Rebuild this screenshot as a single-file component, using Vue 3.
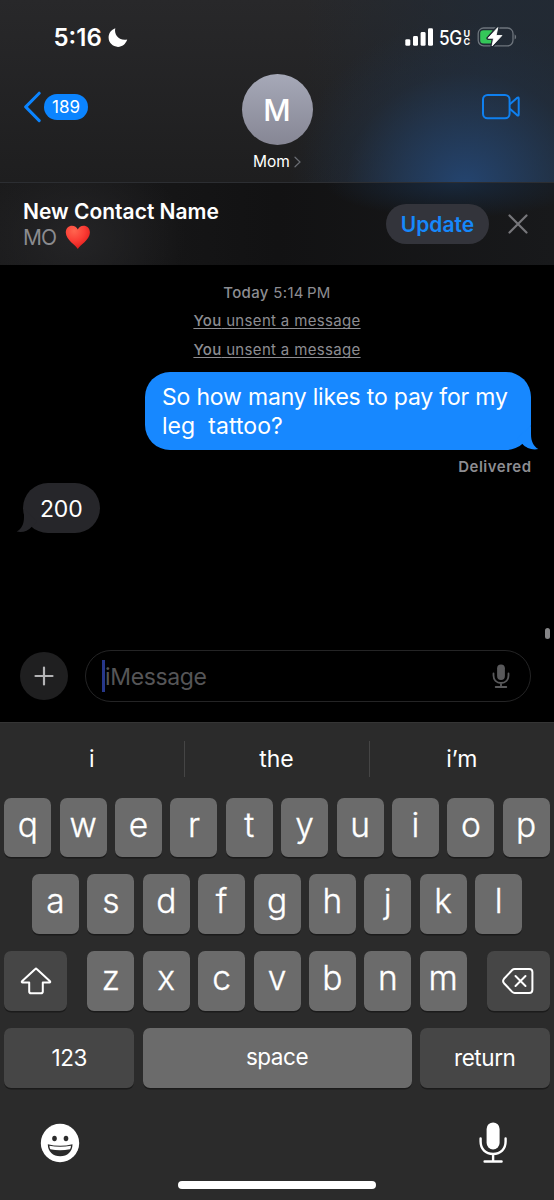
<script setup>
const letterRows = [
  ['q', 'w', 'e', 'r', 't', 'y', 'u', 'i', 'o', 'p'],
  ['a', 's', 'd', 'f', 'g', 'h', 'j', 'k', 'l'],
]
const bottomLetters = ['z', 'x', 'c', 'v', 'b', 'n', 'm']
const suggestions = ['i', 'the', 'i’m']
</script>

<template>
  <div class="phone">
    <header class="header">
      <div class="status">
        <div class="clock">
          <span class="time">5:16</span>
          <svg class="moon" width="20" height="20" viewBox="0 0 20 20">
            <path d="M7.3.3C5.800 6.300 10.500 13.200 19.200 11.600C17.600 16.300 14.200 18.900 10 18.900C4.800 18.900.6 14.800.6 9.600C.6 5.300 3.200 1.700 7.300.3Z" fill="#fff" />
          </svg>
        </div>
        <div class="signals">
          <svg width="29" height="19" viewBox="0 0 29 19" fill="#fff">
            <rect x="0.300" y="11.200" width="5" height="6.600" rx="1.400" />
            <rect x="8" y="8" width="5" height="9.800" rx="1.400" />
            <rect x="15.600" y="4" width="5" height="13.800" rx="1.400" />
            <rect x="23" y="0.200" width="5" height="17.600" rx="1.400" />
          </svg>
          <span class="network">5G</span>
          <span class="uc"><span>U</span><span>C</span></span>
          <svg class="battery" width="40" height="22" viewBox="0 0 40 22">
            <rect x="1.200" y="2" width="34.800" height="17.800" rx="5.500" fill="none" stroke="#6d747c" stroke-width="1.300" />
            <path d="M37.600 8.200Q39.200 9.200 39.200 10.900T37.600 13.600Z" fill="#6d747c" />
            <path d="M6.500 4.200H15.500V17.600H6.500Q3.200 17.600 3.200 14.300V7.500Q3.200 4.200 6.500 4.200Z" fill="#34c759" />
            <path d="M20.600 1.200L10.900 12.300H16.400L14.900 20.500L24.900 9.200H19.200L20.900 1.200Z" fill="#fff" stroke="#222b35" stroke-width="3.200" stroke-linejoin="round" />
            <path d="M20.800 1.600L11.100 12.200H16.600L15.100 20L24.900 9.500H19.100Z" fill="#fff" stroke="#fff" stroke-width=".9" stroke-linejoin="round" />
          </svg>
        </div>
      </div>
      <div class="nav">
        <div class="back">
          <svg width="18" height="32" viewBox="0 0 18 32">
            <path d="M16.200 2.200L2.700 15.900L16.200 29.600" fill="none" stroke="#0b84ff" stroke-width="3" stroke-linecap="round" stroke-linejoin="round" />
          </svg>
          <span class="badge">189</span>
        </div>
        <div class="contact">
          <div class="avatar">M</div>
          <div class="name">
            <span>Mom</span>
            <svg width="7" height="12" viewBox="0 0 7 12">
              <path d="M1 1.200L6 6L1 10.800" fill="none" stroke="#6b6e74" stroke-width="1.200" stroke-linecap="round" />
            </svg>
          </div>
        </div>
        <svg class="video" width="40" height="28" viewBox="0 0 40 28" fill="none" stroke="#0f80f0" stroke-width="2" stroke-linejoin="round">
          <rect x="2" y="1.900" width="26.600" height="23.400" rx="4.600" />
          <path d="M28.800 11.200L36 4.900Q37.700 3.700 37.700 5.700V21.300Q37.700 23.400 36 22.100L28.800 15.800" />
        </svg>
      </div>
    </header>

    <section class="banner">
      <div class="banner-text">
        <div class="banner-title">New Contact Name</div>
        <div class="banner-sub">
          <span>MO</span>
          <svg width="26" height="25" viewBox="0 0 26 25">
            <defs>
              <radialGradient id="heartFill" cx=".35" cy=".22" r=".85">
                <stop offset="0" stop-color="#ff654f" />
                <stop offset=".5" stop-color="#fb3d35" />
                <stop offset="1" stop-color="#dc1717" />
              </radialGradient>
            </defs>
            <path d="M12.800 24C10.800 20.300 1 15 .8 7.800C.6 3.200 3.800.7 7 .7C9.700.7 11.800 2.100 12.800 4.500C13.800 2.100 15.900.7 18.600.7C22 .7 25 3.200 24.900 7.800C24.700 15 14.800 20.300 12.800 24Z" fill="url(#heartFill)" />
          </svg>
        </div>
      </div>
      <button class="update">Update</button>
      <svg class="close" width="22" height="22" viewBox="0 0 22 22">
        <path d="M2.500 2.500L19.500 19.500M19.500 2.500L2.500 19.500" stroke="#77777b" stroke-width="2.200" stroke-linecap="round" />
      </svg>
    </section>

    <main class="thread">
      <div class="stamp"><span class="day">Today</span> <span class="hour">5:14&#8201;PM</span></div>
      <div class="unsent"><span><b>You</b> unsent a message</span></div>
      <div class="unsent"><span><b>You</b> unsent a message</span></div>
      <div class="bubble sent">
        <span class="line first">So how many likes to pay for my</span>
        <span class="line second">leg&nbsp; tattoo?</span>
        <svg class="tail" width="26" height="24" viewBox="0 0 26 24">
          <path d="M18 0V8C18 15.500 20.500 20.300 25.300 23.100C19.500 24.500 13 22.200 9.200 17.800L4 12Z" fill="#1788ff" />
        </svg>
      </div>
      <div class="delivered">Delivered</div>
      <div class="bubble received">
        <span class="line">200</span>
        <svg class="tail" width="26" height="24" viewBox="0 0 26 24">
          <path d="M8 0V8C8 15.500 5.500 19.800.7 22.600C6.500 24 12 21.800 15.800 17.700L21 12Z" fill="#26262a" />
        </svg>
      </div>
      <div class="thumb"></div>
    </main>

    <section class="compose">
      <div class="plus">
        <svg width="20" height="20" viewBox="0 0 20 20">
          <path d="M10 1.500V18.500M1.500 10H18.500" stroke="#b4b4b6" stroke-width="2.200" stroke-linecap="round" />
        </svg>
      </div>
      <div class="field">
        <i class="caret"></i>
        <span class="placeholder">iMessage</span>
        <svg width="18" height="25" viewBox="0 0 18 25">
          <rect x="5.100" y=".4" width="7.800" height="15.600" rx="3.900" fill="#59595b" />
          <path d="M1.500 9.500V11.500C1.500 16 4.500 19 9 19S16.500 16 16.500 11.500V9.500M9 19V23M3.700 23H14.300" fill="none" stroke="#59595b" stroke-width="1.800" stroke-linecap="round" />
        </svg>
      </div>
    </section>

    <section class="keyboard">
      <div class="suggestions">
        <span v-for="word in suggestions" :key="word">{{ word }}</span>
      </div>
      <div class="keys">
        <div v-for="(row, i) in letterRows" :key="i" class="row">
          <div v-for="letter in row" :key="letter" class="key">{{ letter }}</div>
        </div>
        <div class="row spread">
          <div class="key dark side">
            <svg width="32" height="28" viewBox="0 0 32 28">
              <path d="M15.300 1.900Q16 1.200 16.700 1.900L30 14.300Q30.600 15.500 29.500 15.500H22.800V24.400Q22.800 26.200 21 26.200H11Q9.200 26.200 9.200 24.400V15.500H2.500Q1.400 15.500 2 14.300Z" fill="none" stroke="#fff" stroke-width="2" stroke-linejoin="round" />
            </svg>
          </div>
          <div class="row">
            <div v-for="letter in bottomLetters" :key="letter" class="key">{{ letter }}</div>
          </div>
          <div class="key dark side">
            <svg width="32" height="28" viewBox="0 0 32 28" fill="none" stroke="#fff" stroke-width="2" stroke-linecap="round" stroke-linejoin="round">
              <path d="M12.700 1.900H27.200Q30.400 1.900 30.400 5.100V22.800Q30.400 26 27.200 26H12.700Q11.300 26 10.200 24.900L2 16.200Q.2 14 2 11.800L10.200 3Q11.300 1.900 12.700 1.900Z" />
              <path d="M13.500 9L23.500 19M23.500 9L13.500 19" />
            </svg>
          </div>
        </div>
        <div class="row spread words">
          <div class="key dark wide">123</div>
          <div class="key space">space</div>
          <div class="key dark wide">return</div>
        </div>
      </div>
      <div class="tools">
        <svg width="40" height="40" viewBox="0 0 40 40">
          <circle cx="20" cy="20" r="19.200" fill="#fff" />
          <ellipse cx="14.500" cy="15.500" rx="2.300" ry="2.800" fill="#2b2b2b" />
          <ellipse cx="26" cy="15.500" rx="2.300" ry="2.800" fill="#2b2b2b" />
          <path d="M7.800 21.200Q20 24.200 32.500 21.200C32.500 28.700 27.400 33.200 20.200 33.200S7.800 28.700 7.800 21.200Z" fill="#2b2b2b" />
          <path d="M9.400 22.700Q20 25 31 22.700Q30.900 24.800 30 26.200Q20 28.400 10.300 26.200Q9.500 24.800 9.400 22.700Z" fill="#fff" />
        </svg>
        <svg width="28" height="42" viewBox="0 0 28 42">
          <rect x="7.600" y=".4" width="13" height="27" rx="6.500" fill="#fff" />
          <path d="M1.600 16.500V19.600C1.600 27.200 6.600 32 14.100 32S26.600 27.200 26.600 19.600V16.500M14.100 32V39.300M5.600 39.500H22.600" fill="none" stroke="#fff" stroke-width="2.400" stroke-linecap="round" />
        </svg>
      </div>
      <div class="home"></div>
    </section>
  </div>
</template>

<style>
body {
  margin: 0;
  background: #000;
}
</style>

<style scoped>
.phone {
  width: 554px;
  height: 1200px;
  display: flex;
  flex-direction: column;
  background: #000;
  color: #fff;
  font-family: Inter, "Liberation Sans", sans-serif;
  overflow: hidden;
}
.phone * {
  box-sizing: border-box;
  white-space: nowrap;
}
svg {
  display: block;
  flex: none;
}

.header {
  height: 183px;
  flex: none;
  border-bottom: 1px solid #2c2e32;
  background:
    radial-gradient(ellipse 175px 165px at 465px 185px, #24446f 0%, rgba(35, 61, 95, 0.75) 35%, rgba(33, 50, 72, 0.35) 68%, rgba(33, 40, 50, 0) 100%),
    linear-gradient(90deg, rgba(33, 42, 53, 0) 55%, rgba(33, 42, 53, 0.85) 88%),
    linear-gradient(#28282a, #1e1e1f);
}
.status {
  height: 74px;
  padding: 0 37px 0 53.500px;
  display: flex;
  justify-content: space-between;
}
.clock,
.signals {
  display: flex;
}
.time {
  width: 54px;
  font-size: 24px;
  font-weight: 600;
  line-height: 75px;
}
.moon {
  margin-top: 28px;
}
.signals > svg:first-child {
  margin-top: 28px;
}
.network {
  margin-left: 5px;
  width: 24.500px;
  font-size: 20px;
  font-weight: 500;
  line-height: 76px;
  letter-spacing: -0.500px;
  transform: scaleX(0.86);
  transform-origin: left;
}
.uc {
  display: flex;
  flex-direction: column;
  width: 13.500px;
  padding-top: 30px;
  font-size: 9px;
  font-weight: 700;
  line-height: 8px;
}
.battery {
  margin-top: 26px;
}
.nav {
  display: grid;
  grid-template-columns: 1fr 120px 1fr;
  padding: 0 33px 0 23px;
}
.back {
  display: flex;
  align-items: center;
  height: 32px;
  margin-top: 17px;
}
.badge {
  width: 44px;
  height: 26px;
  margin-left: 3px;
  border-radius: 13px;
  background: #0b84ff;
  font-size: 17px;
  line-height: 26px;
  text-align: center;
}
.contact {
  display: flex;
  flex-direction: column;
  align-items: center;
  margin-left: 10px;
}
.avatar {
  width: 71px;
  height: 71px;
  border-radius: 50%;
  background: linear-gradient(#a6a9b8, #868694);
  font-size: 30px;
  font-weight: 500;
  line-height: 73px;
  text-align: center;
}
.name {
  display: flex;
  align-items: center;
  gap: 4px;
  margin-top: 7px;
  font-size: 15.500px;
  line-height: 20px;
}
.video {
  justify-self: end;
  margin-top: 19px;
}

.banner {
  height: 82px;
  flex: none;
  display: flex;
  padding: 0 25px 0 23px;
  background:
    radial-gradient(ellipse 130px 35px at 455px 0, rgba(24, 41, 62, 0.95), rgba(24, 36, 50, 0)),
    radial-gradient(ellipse 110px 90px at 75px 55px, #242426, rgba(30, 30, 31, 0)),
    linear-gradient(90deg, #1a1a1b, #121213 50%, #18191b);
}
.banner-text {
  flex: 1;
  padding-top: 16px;
}
.banner-title {
  font-size: 21px;
  font-weight: 600;
  line-height: 26px;
}
.banner-sub {
  display: flex;
  gap: 9px;
  color: #8b8b8f;
  font-size: 21px;
  line-height: 26px;
  letter-spacing: -0.900px;
}
.update {
  width: 103px;
  height: 40px;
  margin: 21px 18px 0 0;
  padding: 0;
  border: 0;
  border-radius: 20px;
  background: #33343b;
  color: #1688fb;
  font: 600 21px/41px Inter, "Liberation Sans", sans-serif;
}
.close {
  margin-top: 30px;
}

.thread {
  position: relative;
  height: 377px;
  flex: none;
  display: flex;
  flex-direction: column;
  color: #fff;
}
.stamp,
.unsent {
  color: #8d8d92;
  font-size: 15px;
  text-align: center;
  letter-spacing: 0.330px;
}
.stamp {
  margin-top: 14px;
  line-height: 28px;
}
.day {
  font-weight: 500;
}
.unsent {
  line-height: 28.500px;
}
.unsent span {
  text-decoration: underline;
  text-decoration-thickness: 1px;
  text-underline-offset: 2px;
  text-decoration-skip-ink: none;
}
.unsent b {
  font-weight: 500;
}
.bubble {
  position: relative;
  font-size: 23px;
  line-height: 28.500px;
  letter-spacing: -0.190px;
}
.line {
  display: block;
  position: relative;
  z-index: 1;
}
.sent {
  align-self: flex-end;
  width: 386px;
  height: 78px;
  margin: 8px 23px 0 0;
  padding: 11px 0 0 17px;
  border-radius: 25px;
  background: #1788ff;
}
.tail {
  position: absolute;
  bottom: 0;
}
.sent .tail {
  right: -8px;
}
.second {
  letter-spacing: 0.050px;
}
.delivered {
  align-self: flex-end;
  margin: 3px 22.500px 0 0;
  color: #8d8d92;
  font-size: 15px;
  font-weight: 600;
  line-height: 27px;
  letter-spacing: 0.500px;
}
.received {
  width: 77px;
  height: 50px;
  margin: 3px 0 0 23px;
  padding: 11.500px 0 0 17px;
  border-radius: 25px;
  background: #26262a;
}
.received .tail {
  left: -7px;
}
.thumb {
  position: absolute;
  right: 4px;
  top: 363px;
  width: 5px;
  height: 11px;
  border-radius: 3px;
  background: #858587;
}

.compose {
  height: 80px;
  flex: none;
  display: flex;
  align-items: flex-start;
  padding: 8px 23px 0 20px;
}
.plus {
  width: 48px;
  height: 48px;
  margin-top: 2px;
  border-radius: 50%;
  background: #1f1f20;
  display: grid;
  place-items: center;
}
.field {
  flex: 1;
  height: 52px;
  margin-left: 17px;
  padding: 0 20px 0 16px;
  border: 1.500px solid #242425;
  border-radius: 26px;
  display: flex;
  align-items: center;
}
.caret {
  width: 3px;
  height: 32px;
  background: #27378a;
}
.placeholder {
  flex: 1;
  color: #555557;
  font-size: 23px;
  line-height: 52px;
  letter-spacing: -0.350px;
  padding-top: 1px;
}

.keyboard {
  flex: 1;
  border-top: 1px solid #353535;
  background: #2b2b2b;
}
.suggestions {
  height: 74.500px;
  display: grid;
  grid-template-columns: 183.500px 185px 1fr;
  padding-top: 18px;
}
.suggestions span {
  height: 36px;
  font-size: 23px;
  line-height: 37px;
  text-align: center;
}
.suggestions span:not(:first-child) {
  border-left: 1px solid #454545;
}
.keys {
  display: flex;
  flex-direction: column;
  gap: 17.400px;
  padding: 0 4.300px;
}
.row {
  display: flex;
  justify-content: center;
  gap: 8.400px;
}
.spread {
  justify-content: space-between;
  gap: 0;
}
.key {
  width: 47px;
  height: 59.500px;
  border-radius: 7px;
  background: #6b6b6b;
  box-shadow: 0 1.500px 0 #1b1b1b;
  font-size: 33.500px;
  font-weight: 300;
  line-height: 55px;
  text-align: center;
  -webkit-text-stroke: 0.350px #fff;
}
.dark {
  background: #464646;
}
.side {
  width: 63px;
  display: grid;
  place-items: center;
}
.words .key {
  font-size: 22.500px;
  font-weight: 400;
  line-height: 59px;
  letter-spacing: -0.450px;
  -webkit-text-stroke: 0;
}
.words .wide {
  width: 130px;
}
.words .space {
  width: 269px;
  line-height: 57px;
}
.tools {
  display: flex;
  justify-content: space-between;
  padding: 34.500px 47px 0 40px;
}
.tools svg:first-child {
  margin-top: 1px;
}
.home {
  width: 198px;
  height: 8px;
  margin: 17px 0 0 178px;
  border-radius: 4px;
  background: #fff;
}
</style>
